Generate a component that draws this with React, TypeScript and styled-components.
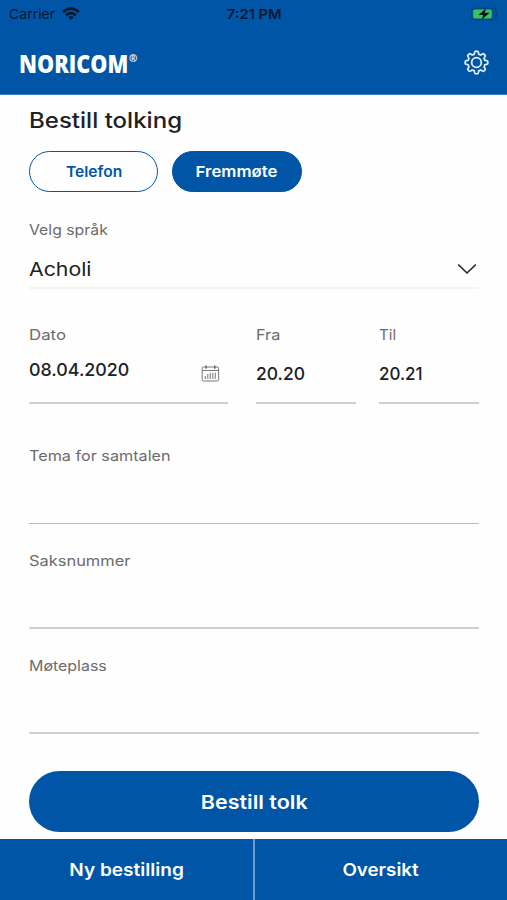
import React from "react";
import styled, { createGlobalStyle, css } from "styled-components";

const blue = "#0055a6";

const GlobalStyle = createGlobalStyle`
  *, *::before, *::after { box-sizing: border-box; }
  body { margin: 0; background: #fefefe; }
  button { font: inherit; padding: 0; margin: 0; border: 0; background: none; cursor: pointer; }
`;

const Screen = styled.div`
  width: 507px;
  height: 900px;
  display: flex;
  flex-direction: column;
  background: #fefefe;
  color: #202124;
  font-family: Inter, "Liberation Sans", sans-serif;
  overflow: hidden;
`;

const Wide = styled.span<{ $by?: number; $from?: "left" | "center" }>`
  display: inline-block;
  white-space: nowrap;
  transform: scaleX(${(p) => p.$by ?? 1.11});
  transform-origin: ${(p) => p.$from ?? "left"} center;
`;

const Header = styled.header`
  flex: none;
  height: 95px;
  background: ${blue};
  border-bottom: 1px solid #3f80bd;
`;

const StatusBar = styled.div`
  height: 28px;
  padding: 0 7px 0 9px;
  display: grid;
  grid-template-columns: 1fr auto 1fr;
  align-items: center;
  color: #06182e;
`;

const Carrier = styled.div`
  display: flex;
  align-items: center;
  gap: 9px;
  font-size: 13.5px;
`;

const Clock = styled.div`
  font-size: 13px;
  font-weight: 600;
`;

const BatterySlot = styled.div`
  display: flex;
  justify-content: flex-end;
`;

const Brand = styled.div`
  height: 67px;
  padding: 2px 18px 0 19px;
  display: flex;
  align-items: center;
  justify-content: space-between;
`;

const Logo = styled.div`
  display: flex;
  align-items: flex-start;
  color: #fff;
  font-family: "Open Sans", sans-serif;
  font-weight: 800;
  font-size: 25px;
  line-height: 30px;
`;

const LogoWord = styled.span`
  width: 110px;
`;

const LogoText = styled(Wide)`
  width: 127px;
`;

const Registered = styled.span`
  font-size: 10px;
  line-height: 14px;
  margin-top: 3px;
  font-weight: 700;
`;

const Form = styled.main`
  flex: 1;
  padding: 12px 28px 0 29px;
`;

const Title = styled.h1`
  margin: 0;
  height: 28px;
  font-size: 21px;
  line-height: 28px;
  font-weight: 500;
`;

const Pills = styled.div`
  display: flex;
  gap: 14px;
  margin-top: 16px;
`;

const Pill = styled.button<{ $active?: boolean }>`
  && {
    width: 129.3px;
    height: 41px;
    border-radius: 21px;
    border: 1.5px solid ${blue};
    font-size: 15px;
    font-weight: 600;
    color: ${blue};
    ${(p) => p.$active && css`background: ${blue}; color: #fff;`}
  }
`;

const Field = styled.div<{ $top: number; $height: number; $line?: "faint" | "thin" | "thick" }>`
  margin-top: ${(p) => p.$top}px;
  height: ${(p) => p.$height}px;
  border-bottom: ${(p) =>
    p.$line === "faint" ? "2px solid #f3f3f3" : p.$line === "thin" ? "1px solid #b9b9b9" : "2px solid #d0d0d0"};
`;

const Label = styled.div`
  height: 20px;
  line-height: 20px;
  font-size: 14.5px;
  color: #6c6c6c;
`;

const Selected = styled.div`
  display: flex;
  align-items: center;
  justify-content: space-between;
  height: 28px;
  margin-top: 15px;
  padding-right: 2.5px;
  font-size: 19px;
`;

const When = styled.div`
  display: grid;
  grid-template-columns: 199px 100px 100px;
  column-gap: 28px;
  > :last-child { margin-left: -5px; width: 100px; }
`;

const Value = styled.div<{ $top: number }>`
  display: flex;
  justify-content: space-between;
  height: 24px;
  line-height: 24px;
  margin-top: ${(p) => p.$top}px;
  padding-right: 8px;
  font-size: 17.5px;
  font-weight: 450;
  svg { margin-top: 7px; flex: none; }
`;

const Submit = styled.button`
  && {
    display: block;
    width: 450px;
    height: 61px;
    margin-top: 37px;
    padding-top: 1px;
    border-radius: 31px;
    background: ${blue};
    color: #fff;
    font-size: 19px;
    font-weight: 600;
  }
`;

const Tabs = styled.nav`
  flex: none;
  height: 61px;
  display: grid;
  grid-template-columns: 254.5px 1fr;
  background: ${blue};
`;

const Tab = styled.button`
  && {
    color: #fff;
    font-size: 17.5px;
    font-weight: 600;
  }
  &&:first-child { border-right: 2px solid #6b9fd0; }
`;

const Wifi = () => (
  <svg width="18" height="14" viewBox="0 0 18 14" fill="none" stroke="#06182e" strokeWidth="2.7">
    <path d="M1 5.1Q9-2 17 5.1M4 8.3Q9 3.9 14 8.3" />
    <path d="M9 13 6.2 10.2Q9 8 11.8 10.2Z" fill="#06182e" stroke="none" />
  </svg>
);

const Battery = () => (
  <svg width="29" height="14" viewBox="0 0 29 14">
    <rect x=".7" y="1.2" width="24.6" height="11.6" rx="3" fill="#07509a" stroke="#074078" strokeWidth="1" />
    <rect x="2.2" y="2.6" width="18.6" height="8.8" rx="1.6" fill="#37c461" />
    <path d="M26.7 5.2q1.6 1.8 0 3.8z" fill="#074078" />
    <path d="M15 1.5 7.4 7.9h4.8l-1.5 4.7 8-6.8h-5z" fill="#04142a" />
  </svg>
);

const teeth = 8;
const gearPath = (() => {
  const points: string[] = [];
  for (let i = 0; i <= 192; i++) {
    const a = (i / 192) * Math.PI * 2;
    const wave = Math.max(-0.8, Math.min(0.8, Math.cos(a * teeth) * 1.4));
    const r = 9.9 + wave * 1.7;
    points.push(`${(12.5 + r * Math.sin(a)).toFixed(2)} ${(12.5 - r * Math.cos(a)).toFixed(2)}`);
  }
  return `M${points.join("L")}Z`;
})();

const Gear = () => (
  <svg width="25" height="25" viewBox="0 0 25 25" fill="none" stroke="#e4effa" strokeWidth="1.75" strokeLinejoin="round">
    <path d={gearPath} />
    <circle cx="12.5" cy="12.5" r="4.8" />
  </svg>
);

const Chevron = () => (
  <svg width="20" height="12" viewBox="0 0 20 12" fill="none" stroke="#222" strokeWidth="1.6">
    <path d="M1.2 1.5 10 10l8.8-8.5" />
  </svg>
);

const Calendar = () => (
  <svg width="19" height="17" viewBox="0 0 19 17" fill="none" stroke="#777" strokeWidth="1">
    <rect x="1.2" y="2" width="16.4" height="14" rx="1.2" />
    <path d="M1.2 5.5h16.4" />
    <path d="M5 .5v3.2M13.8.5v3.2" stroke="#555" strokeWidth="1.3" />
    <path d="M4.3 11v3M6.8 9v5M9.3 7.8V14M11.8 7.8V14M14.3 7.8V14" stroke="#8c8c8c" strokeWidth="1.2" />
  </svg>
);

export default function App() {
  return (
    <>
      <GlobalStyle />
      <Screen>
        <Header>
          <StatusBar>
            <Carrier><Wide $by={1.04}>Carrier</Wide><Wifi /></Carrier>
            <Clock><Wide $by={1.13} $from="center">7:21 PM</Wide></Clock>
            <BatterySlot><Battery /></BatterySlot>
          </StatusBar>
          <Brand>
            <Logo><LogoWord><LogoText $by={0.862}>NORICOM</LogoText></LogoWord><Registered>®</Registered></Logo>
            <Gear />
          </Brand>
        </Header>
        <Form>
          <Title><Wide $by={1.145}>Bestill tolking</Wide></Title>
          <Pills>
            <Pill><Wide $by={1.04} $from="center">Telefon</Wide></Pill>
            <Pill $active><Wide $by={1.12} $from="center">Fremmøte</Wide></Pill>
          </Pills>
          <Field $top={28} $height={69} $line="faint">
            <Label><Wide $by={1.09}>Velg språk</Wide></Label>
            <Selected><Wide $by={1.12}>Acholi</Wide><Chevron /></Selected>
          </Field>
          <When>
            <Field $top={36} $height={79}>
              <Label><Wide $by={1.16}>Dato</Wide></Label>
              <Value $top={13}><Wide $by={1.02}>08.04.2020</Wide><Calendar /></Value>
            </Field>
            <Field $top={36} $height={79}>
              <Label><Wide $by={1.12}>Fra</Wide></Label>
              <Value $top={17}><Wide $by={1}>20.20</Wide></Value>
            </Field>
            <Field $top={36} $height={79}>
              <Label><Wide $by={1.04}>Til</Wide></Label>
              <Value $top={17}><Wide $by={0.97}>20.21</Wide></Value>
            </Field>
          </When>
          <Field $top={42} $height={78} $line="thin">
            <Label><Wide $by={1.117}>Tema for samtalen</Wide></Label>
          </Field>
          <Field $top={27} $height={78}>
            <Label><Wide $by={1.133}>Saksnummer</Wide></Label>
          </Field>
          <Field $top={27} $height={78}>
            <Label><Wide $by={1.1}>Møteplass</Wide></Label>
          </Field>
          <Submit><Wide $by={1.132} $from="center">Bestill tolk</Wide></Submit>
        </Form>
        <Tabs>
          <Tab><Wide $by={1.09} $from="center">Ny bestilling</Wide></Tab>
          <Tab><Wide $by={1.073} $from="center">Oversikt</Wide></Tab>
        </Tabs>
      </Screen>
    </>
  );
}
